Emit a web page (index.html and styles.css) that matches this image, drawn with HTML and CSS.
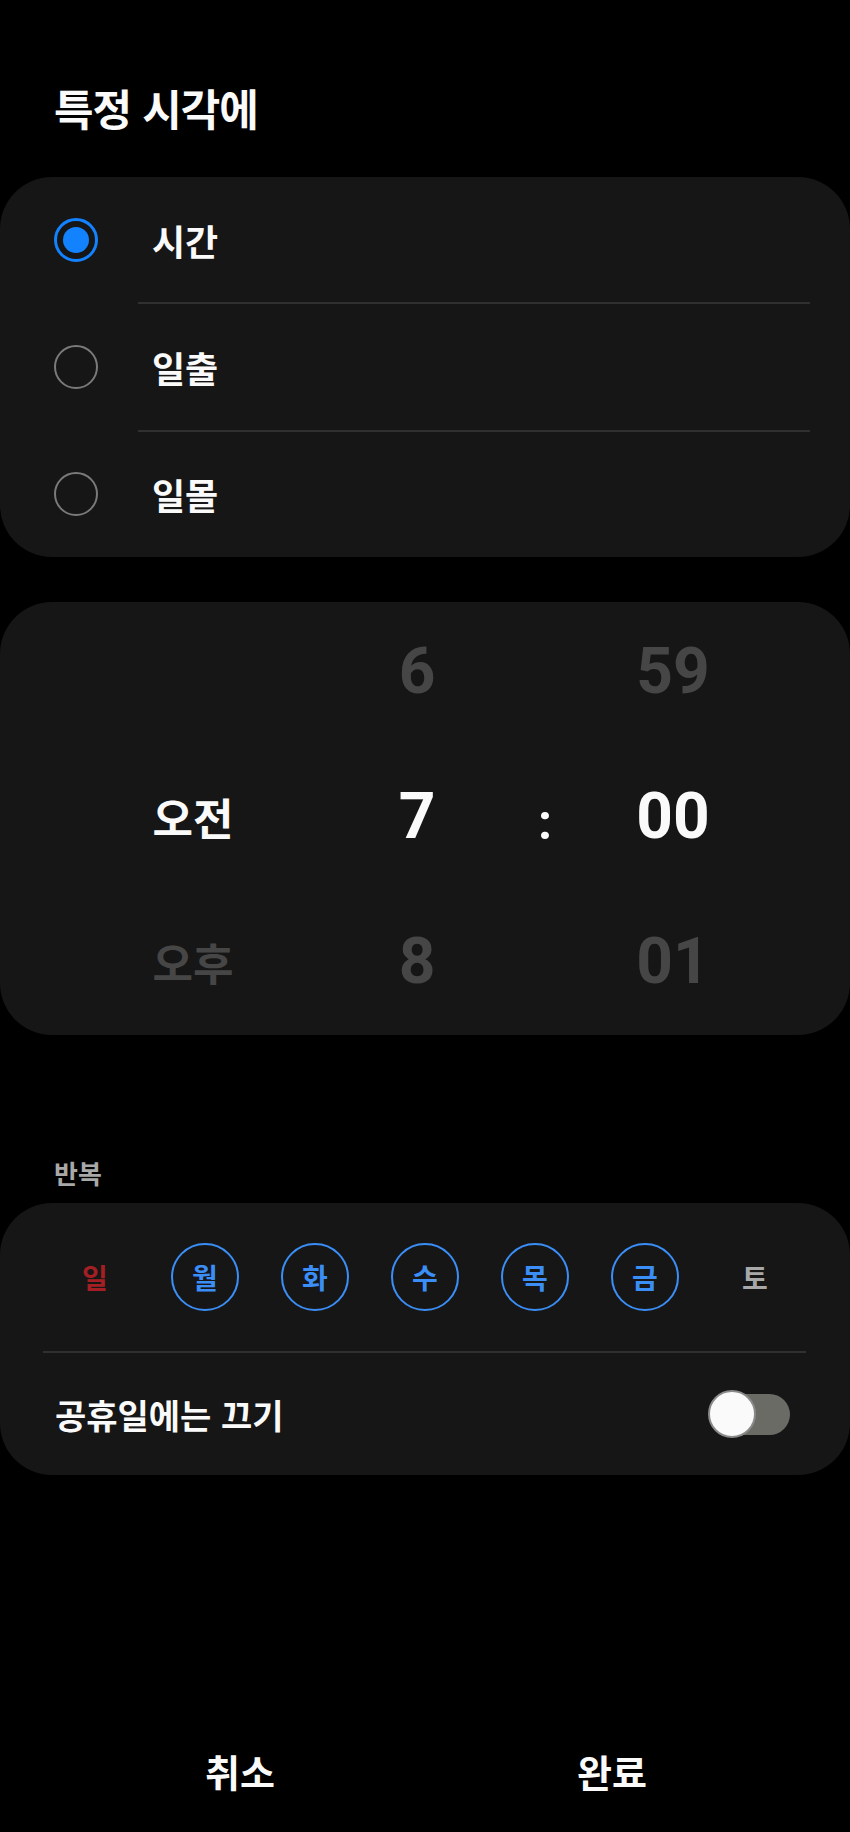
FILE: index.html
```html
<!DOCTYPE html>
<html lang="ko">
<head>
<meta charset="utf-8">
<link rel="stylesheet" href="styles.css">
</head>
<body>
<div class="screen">
  <header class="header"><h1 class="title">특정 시각에</h1></header>

  <section class="card options">
    <div class="opt-row">
      <span class="radio checked"><span class="dot"></span></span>
      <span class="opt-label">시간</span>
    </div>
    <div class="sep sep-opt"></div>
    <div class="opt-row">
      <span class="radio"></span>
      <span class="opt-label">일출</span>
    </div>
    <div class="sep sep-opt"></div>
    <div class="opt-row">
      <span class="radio"></span>
      <span class="opt-label">일몰</span>
    </div>
  </section>

  <section class="card picker">
    <div class="cell"></div>
    <div class="cell num dim">6</div>
    <div class="cell"></div>
    <div class="cell num dim">59</div>

    <div class="cell ko active">오전</div>
    <div class="cell num active">7</div>
    <div class="cell colon">:</div>
    <div class="cell num active">00</div>

    <div class="cell ko dim">오후</div>
    <div class="cell num dim">8</div>
    <div class="cell"></div>
    <div class="cell num dim">01</div>
  </section>

  <div class="section-label">반복</div>

  <section class="card repeat">
    <div class="days">
      <span class="day sun">일</span>
      <span class="day on">월</span>
      <span class="day on">화</span>
      <span class="day on">수</span>
      <span class="day on">목</span>
      <span class="day on">금</span>
      <span class="day sat">토</span>
    </div>
    <div class="sep sep-repeat"></div>
    <div class="toggle-row">
      <span class="toggle-label">공휴일에는 끄기</span>
      <span class="switch"><span class="thumb"></span></span>
    </div>
  </section>

  <footer class="footer">
    <button class="btn">취소</button>
    <button class="btn">완료</button>
  </footer>
</div>
</body>
</html>
```

FILE: styles.css
```css
* { box-sizing: border-box; }

html, body {
  margin: 0;
  padding: 0;
  background: #000;
}

body {
  font-family: "Noto Sans CJK KR", "Noto Sans", sans-serif;
  color: #fafafa;
  width: 850px;
  height: 1832px;
  overflow: hidden;
}

.header {
  height: 177px;
  padding: 82px 0 0 54px;
}

.title {
  margin: 0;
  font-size: 43px;
  line-height: 50px;
  font-weight: 700;
  letter-spacing: -1px;
}

.card {
  background: #161616;
  border-radius: 52px;
}

/* options card */
.options {
  height: 380px;
  display: flex;
  flex-direction: column;
}

.opt-row {
  flex: 1;
  display: flex;
  align-items: center;
  padding-left: 54px;
}

.radio {
  width: 44px;
  height: 44px;
  border-radius: 50%;
  border: 2px solid #7a7a7a;
  display: flex;
  align-items: center;
  justify-content: center;
  flex-shrink: 0;
}

.radio.checked {
  border: 3px solid #1282ff;
}

.radio .dot {
  width: 26px;
  height: 26px;
  border-radius: 50%;
  background: #1282ff;
}

.opt-label {
  margin-left: 54px;
  font-size: 36px;
  font-weight: 700;
  line-height: 44px;
}

.sep {
  height: 2px;
  background: #303030;
  flex-shrink: 0;
}

.sep-opt {
  margin: 0 40px 0 138px;
}

/* picker card */
.picker {
  margin-top: 45px;
  height: 433px;
  padding: 0 0 3px 80px;
  display: grid;
  grid-template-columns: 226px 222px 34px 222px;
  grid-template-rows: 140px 140px 140px;
  row-gap: 5px;
  align-items: center;
  justify-items: center;
}

.cell {
  line-height: 1;
}

.num {
  font-family: Roboto, "Liberation Sans", sans-serif;
  font-weight: 700;
  font-size: 64px;
}

.ko {
  font-size: 44px;
  font-weight: 700;
}

.active { color: #fafafa; }
.dim { color: #464646; }

.colon {
  font-family: Roboto, "Liberation Sans", sans-serif;
  font-weight: 700;
  font-size: 50px;
  color: #fafafa;
  padding-top: 10px;
}

/* repeat */
.section-label {
  margin-top: 122px;
  height: 32px;
  line-height: 32px;
  padding-left: 54px;
  font-size: 26px;
  font-weight: 700;
  color: #a8a8a8;
}

.repeat {
  margin-top: 14px;
  height: 272px;
  padding-top: 40px;
}

.days {
  display: grid;
  grid-template-columns: repeat(7, 110px);
  padding: 0 40px;
  height: 68px;
  align-items: center;
  justify-items: center;
}

.day {
  width: 68px;
  height: 68px;
  border-radius: 50%;
  display: flex;
  align-items: center;
  justify-content: center;
  font-size: 28px;
  font-weight: 700;
}

.day.on {
  border: 2.5px solid #3a8ef6;
  color: #3a8ef6;
}

.day.sun { color: #a31f24; }
.day.sat { color: #a8a8a8; }

.sep-repeat {
  margin: 40px 44px 0 43px;
}

.toggle-row {
  height: 122px;
  display: flex;
  align-items: center;
  justify-content: space-between;
  padding: 0 60px 0 55px;
}

.toggle-label {
  font-size: 34px;
  font-weight: 700;
}

.switch {
  position: relative;
  width: 80px;
  height: 41px;
  border-radius: 21px;
  background: #6b6b66;
}

.thumb {
  position: absolute;
  left: -2px;
  top: -3.5px;
  width: 48px;
  height: 48px;
  border-radius: 50%;
  background: #fafafa;
  border: 2px solid #8a8a8a;
}

/* footer */
.footer {
  margin-top: 255px;
  height: 80px;
  padding: 0 52px 0 54px;
  display: grid;
  grid-template-columns: 1fr 1fr;
}

.btn {
  background: none;
  border: 0;
  padding: 0;
  font-family: "Noto Sans CJK KR", "Noto Sans", sans-serif;
  font-size: 38px;
  font-weight: 700;
  color: #fafafa;
}
```
